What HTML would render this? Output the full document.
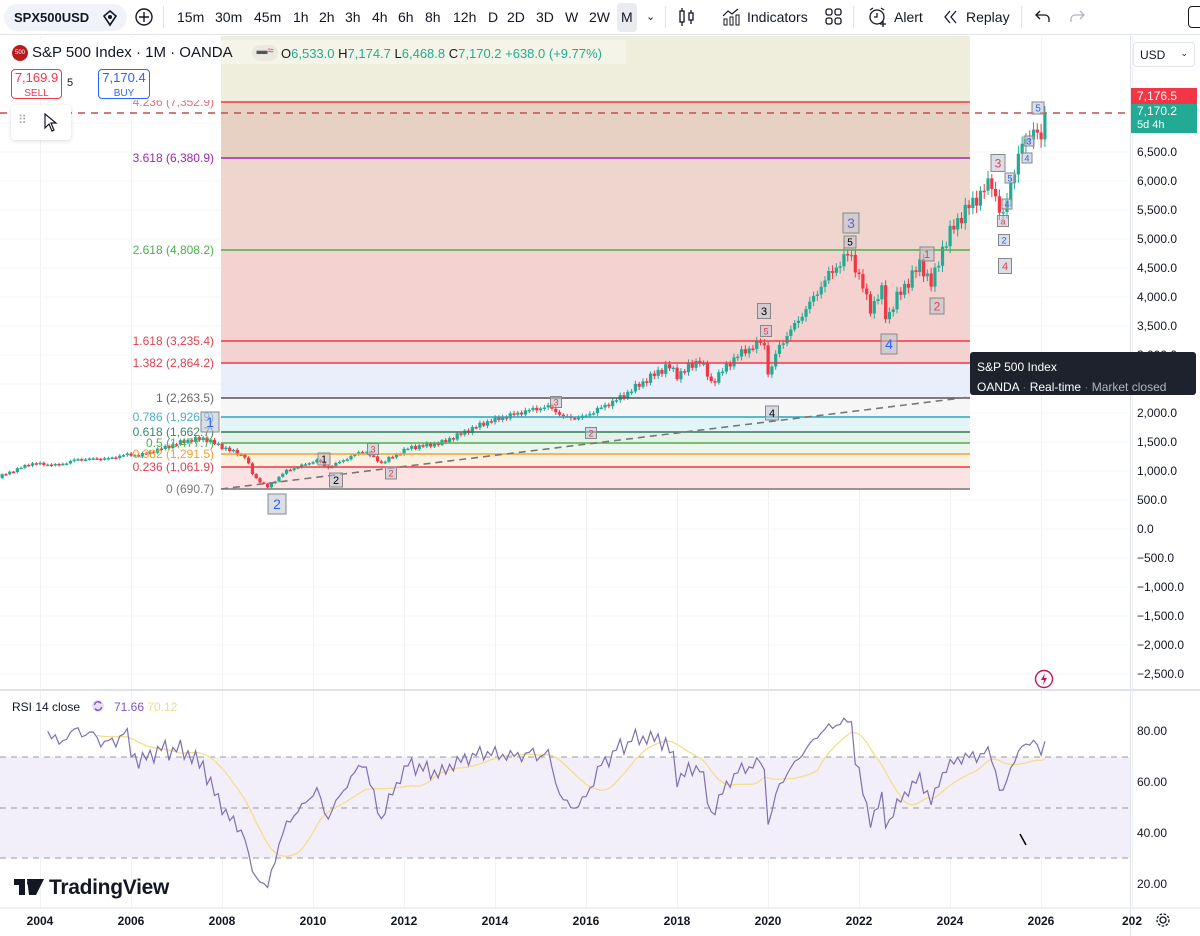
<!DOCTYPE html>
<html><head><meta charset="utf-8"><style>
*{margin:0;padding:0;box-sizing:border-box}
body{width:1200px;height:936px;overflow:hidden;background:#fff;font-family:"Liberation Sans",Arial,sans-serif;color:#131722;position:relative}
.tb{position:absolute;left:0;top:0;width:1200px;height:35px;border-bottom:1px solid #e0e3eb;background:#fff;font-size:14px}
.tb span{position:absolute;top:9px}
.sym{position:absolute;left:4px;top:4px;width:123px;height:27px;background:#f0f3fa;border-radius:14px;font-weight:bold;font-size:13px;padding:6px 0 0 10px}
.ab{position:absolute;font-size:12px}
</style></head><body>
<div class="tb">
<div class="sym">SPX500USD</div>
<svg style="position:absolute;left:101px;top:9px" width="18" height="18" viewBox="0 0 18 18"><path d="M9 2 L15 7 L9 16 L3 7Z" fill="none" stroke="#131722" stroke-width="1.6"/><circle cx="9" cy="8" r="2" fill="#131722"/></svg>
<svg style="position:absolute;left:134px;top:7px" width="20" height="20"><circle cx="10" cy="10" r="8" fill="none" stroke="#131722" stroke-width="1.4"/><path d="M10 5v10M5 10h10" stroke="#131722" stroke-width="1.4"/></svg>
<div style="position:absolute;left:163px;top:6px;width:1px;height:22px;background:#e0e3eb"></div>
<span style="left:177px">15m</span><span style="left:215px">30m</span><span style="left:254px">45m</span><span style="left:293px">1h</span><span style="left:319px">2h</span><span style="left:345px">3h</span><span style="left:372px">4h</span><span style="left:398px">6h</span><span style="left:425px">8h</span><span style="left:453px">12h</span><span style="left:488px">D</span><span style="left:507px">2D</span><span style="left:536px">3D</span><span style="left:565px">W</span><span style="left:589px">2W</span>
<div style="position:absolute;left:617px;top:3px;width:20px;height:29px;background:#e9ebef;border-radius:4px"></div><span style="left:621px">M</span>
<span style="left:646px;font-size:11px;top:10px">⌄</span>
<div style="position:absolute;left:665px;top:6px;width:1px;height:22px;background:#e0e3eb"></div>
<svg style="position:absolute;left:678px;top:7px" width="18" height="20"><rect x="2" y="4" width="4" height="11" fill="none" stroke="#131722" stroke-width="1.3"/><path d="M4 1v3M4 15v4M13 3v3M13 13v4" stroke="#131722" stroke-width="1.3"/><rect x="11" y="6" width="4" height="7" fill="none" stroke="#131722" stroke-width="1.3"/></svg>
<svg style="position:absolute;left:722px;top:8px" width="20" height="18"><path d="M1 8 L6 3 L10 6 L16 1" fill="none" stroke="#131722" stroke-width="1.2"/><rect x="2" y="11" width="3" height="6" fill="none" stroke="#131722"/><rect x="8" y="9" width="3" height="8" fill="none" stroke="#131722"/><rect x="14" y="7" width="3" height="10" fill="none" stroke="#131722"/></svg>
<span style="left:747px">Indicators</span>
<svg style="position:absolute;left:825px;top:8px" width="18" height="18"><rect x="1" y="1" width="6" height="6" rx="2" fill="none" stroke="#131722" stroke-width="1.3"/><rect x="10" y="1" width="6" height="6" rx="2" fill="none" stroke="#131722" stroke-width="1.3"/><rect x="1" y="10" width="6" height="6" rx="2" fill="none" stroke="#131722" stroke-width="1.3"/><rect x="10" y="10" width="6" height="6" rx="2" fill="none" stroke="#131722" stroke-width="1.3"/></svg>
<div style="position:absolute;left:853px;top:6px;width:1px;height:22px;background:#e0e3eb"></div>
<svg style="position:absolute;left:867px;top:6px" width="22" height="22"><circle cx="10" cy="11" r="7" fill="none" stroke="#131722" stroke-width="1.3"/><path d="M10 7v4h-3M3 4l3-2M17 4l-3-2M16 15v6M13 18h6" stroke="#131722" stroke-width="1.3" fill="none"/></svg>
<span style="left:894px">Alert</span>
<svg style="position:absolute;left:943px;top:10px" width="16" height="14"><path d="M7 1 L2 7 L7 13 M13 1 L8 7 L13 13" fill="none" stroke="#131722" stroke-width="1.3"/></svg><span style="left:966px">Replay</span>
<div style="position:absolute;left:1021px;top:6px;width:1px;height:22px;background:#e0e3eb"></div>
<svg style="position:absolute;left:1035px;top:9px" width="16" height="14"><path d="M5 2 L1 6 L5 10 M1 6 H10 a4 4 0 0 1 4 4 V13" fill="none" stroke="#131722" stroke-width="1.3"/></svg>
<svg style="position:absolute;left:1069px;top:9px" width="16" height="14"><path d="M11 2 L15 6 L11 10 M15 6 H6 a4 4 0 0 0 -4 4 V13" fill="none" stroke="#b2b5be" stroke-width="1.3"/></svg>
<div style="position:absolute;left:1188px;top:6px;width:20px;height:22px;border:1.5px solid #131722;border-radius:4px"></div>
</div>

<svg id="ch" style="position:absolute;left:0;top:36px" width="1200" height="900" viewBox="0 36 1200 900">
<g id="bg"></g><g id="cd"></g><g id="ov"></g>
</svg>

<div style="position:absolute;left:0;top:38px;width:221px;height:62px;background:#fff"></div>
<div style="position:absolute;left:221px;top:40px;width:405px;height:24px;background:rgba(255,255,255,.35)"></div>
<div style="position:absolute;left:12px;top:45px;width:16px;height:16px;border-radius:50%;background:#b71c1c;color:#fff;font-size:6px;text-align:center;line-height:16px">500</div>
<div class="ab" style="left:32px;top:44px;font-size:15px">S&amp;P 500 Index · 1M · OANDA</div>
<div style="position:absolute;left:252px;top:45px;width:26px;height:16px;background:#e9e9e0;border-radius:8px;font-size:11px;text-align:center;color:#e53935"><b style="color:#555">▬</b>≈</div>
<div class="ab" style="left:281px;top:46px;font-size:13px;color:#22ab94">
<span style="color:#131722">O</span>6,533.0 <span style="color:#131722">H</span>7,174.7 <span style="color:#131722">L</span>6,468.8 <span style="color:#131722">C</span>7,170.2 +638.0 (+9.77%)</div>
<div style="position:absolute;left:11px;top:69px;width:51px;height:30px;border:1px solid #f23645;border-radius:4px;background:#fff;text-align:center;color:#f23645;font-size:13px;line-height:14px;padding-top:1px">7,169.9<br><span style="font-size:10px">SELL</span></div>
<div class="ab" style="left:67px;top:77px;font-size:11px">5</div>
<div style="position:absolute;left:98px;top:69px;width:52px;height:30px;border:1px solid #2962ff;border-radius:4px;background:#fff;text-align:center;color:#2962ff;font-size:13px;line-height:14px;padding-top:1px">7,170.4<br><span style="font-size:10px">BUY</span></div>
<div style="position:absolute;left:11px;top:105px;width:60px;height:35px;background:#fff;border-radius:4px;box-shadow:0 1px 4px rgba(0,0,0,.15)"></div>
<div class="ab" style="left:18px;top:113px;color:#aaa;font-size:12px">⠿</div>
<svg style="position:absolute;left:43px;top:113px" width="16" height="20"><path d="M2 1 L2 15 L6 11 L9 18 L11 17 L8 10 L13 10Z" fill="#fff" stroke="#131722" stroke-width="1.2"/></svg>

<div style="position:absolute;left:1133px;top:42px;width:62px;height:25px;border:1px solid #e0e3eb;border-radius:4px;font-size:12px;padding:5px 0 0 6px">USD <span style="float:right;margin-right:6px;font-size:9px">⌄</span></div>
<div style="position:absolute;left:1131px;top:88px;width:66px;height:16px;background:#f23645;color:#fff;font-size:12px;padding:1px 0 0 6px">7,176.5</div>
<div style="position:absolute;left:1131px;top:104px;width:66px;height:29px;background:#22ab94;color:#fff;font-size:12px;padding:1px 0 0 6px;line-height:13px">7,170.2<br><span style="font-size:11px">5d 4h</span></div>

<div style="position:absolute;left:970px;top:352px;width:226px;height:43px;background:#1e222d;border-radius:3px;color:#fff;font-size:12px;padding:5px 0 0 7px;line-height:20px">S&amp;P 500 Index<br>OANDA <span style="color:#787b86">·</span> Real-time <span style="color:#787b86">·</span> <span style="color:#b2b5be">Market closed</span></div>

<svg style="position:absolute;left:1034px;top:669px" width="20" height="20"><circle cx="10" cy="10" r="8.5" fill="none" stroke="#c2185b" stroke-width="1.4"/><path d="M11 4 L7 11 L10 11 L9 16 L13 9 L10 9Z" fill="#c2185b"/></svg>

<div class="ab" style="left:12px;top:700px;font-size:12px">RSI 14 close</div>
<svg style="position:absolute;left:91px;top:699px" width="14" height="14"><circle cx="7" cy="7" r="6" fill="#e8e0f8"/><path d="M3.5 6a3.5 3.5 0 0 1 6.5-1.5M10.5 8a3.5 3.5 0 0 1-6.5 1.5" stroke="#7e57c2" stroke-width="1.4" fill="none"/></svg>
<div class="ab" style="left:114px;top:700px;font-size:12px;color:#7e57c2">71.66 <span style="color:#e8e08a">70.12</span></div>
<svg style="position:absolute;left:14px;top:879px" width="30" height="16"><path d="M0 0 H11 V16 H5 V6 H0Z M13 0 h17 L22 16 h-7 z" fill="#131722"/><circle cx="16" cy="4" r="3" fill="#131722"/></svg>
<div class="ab" style="left:49px;top:876px;font-size:21px;font-weight:bold;letter-spacing:-0.3px">TradingView</div>
<svg style="position:absolute;left:1155px;top:912px" width="16" height="16"><circle cx="8" cy="8" r="3" fill="none" stroke="#131722" stroke-width="1.3"/><circle cx="8" cy="8" r="6" fill="none" stroke="#131722" stroke-width="1.3" stroke-dasharray="2.5 1.6"/></svg>

<script>
var NS="http://www.w3.org/2000/svg";
function el(p,t,a){var e=document.createElementNS(NS,t);for(var k in a)e.setAttribute(k,a[k]);p.appendChild(e);return e;}
function X(t){return 40+(t-2004)*45.5;}
function Y(p){return 529-p*0.058;}
var bg=document.getElementById("bg"),cd=document.getElementById("cd"),ov=document.getElementById("ov");
for(var y=2004;y<=2028;y+=2){el(bg,"line",{x1:X(y)+0.5,x2:X(y)+0.5,y1:36,y2:908,stroke:"#f0f1f4"});}
for(var p=-2500;p<=7000;p+=500){var yy=Y(p);el(bg,"line",{x1:0,x2:1130,y1:yy,y2:yy,stroke:"#f6f7f9"});}
el(bg,"rect",{x:221,y:36,width:749,height:66,fill:"#efeedd"});
var zones=[[102,158,"#e6d1c2"],[158,250,"#eed5cd"],[250,341,"#f4d2d0"],[341,363,"#f2d3d2"],[363,398,"#e8effa"],[398,417,"#f6f6f6"],[417,432,"#e3f5f8"],[432,443,"#e4f2ea"],[443,454,"#ecf6ec"],[454,467,"#fcf0e1"],[467,489,"#fbe3e3"]];
zones.forEach(function(z){el(bg,"rect",{x:221,y:z[0],width:749,height:z[1]-z[0],fill:z[2]});});
var fib=[["4.236 (7,352.9)",102,"#f23645","#e07080"],["3.618 (6,380.9)",158,"#9c27b0","#9c27b0"],["2.618 (4,808.2)",250,"#4caf50","#4caf50"],["1.618 (3,235.4)",341,"#f23645","#e04050"],["1.382 (2,864.2)",363,"#f23645","#e04050"],["1 (2,263.5)",398,"#555","#666"],["0.786 (1,926.9)",417,"#26a6c0","#4ab0c8"],["0.618 (1,662.7)",432,"#2e7d5b","#3a8a68"],["0.5 (1,477.7)",443,"#4caf50","#4caf50"],["0.382 (1,291.5)",454,"#f5a030","#f0a030"],["0.236 (1,061.9)",467,"#f23645","#e04050"],["0 (690.7)",489,"#777","#777"]];
fib.forEach(function(f){el(ov,"line",{x1:221,x2:970,y1:f[1],y2:f[1],stroke:f[2],"stroke-width":1.6});var t=el(ov,"text",{x:214,y:f[1]+4,"text-anchor":"end","font-size":12,fill:f[3],"font-family":"Liberation Sans"});t.textContent=f[0];});
el(ov,"line",{x1:221,x2:970,y1:489,y2:397,stroke:"#777","stroke-width":1.6,"stroke-dasharray":"7 5"});
el(ov,"line",{x1:0,x2:1130,y1:113,y2:113,stroke:"#c0504d","stroke-width":1.4,"stroke-dasharray":"7 6"});
var K=[[2003.0,860],[2003.2,870],[2004,1130],[2004.6,1100],[2005,1200],[2005.8,1220],[2006,1280],[2006.4,1270],[2007,1420],[2007.4,1520],[2007.8,1560],[2008.3,1380],[2008.7,1250],[2008.9,900],[2009.2,720],[2009.6,1000],[2010.3,1190],[2010.5,1050],[2011.3,1350],[2011.7,1140],[2012.3,1400],[2013,1480],[2014,1840],[2015,2060],[2015.4,2110],[2015.7,1930],[2016.1,1920],[2016.9,2240],[2018,2820],[2018.2,2650],[2018.7,2920],[2018.95,2520],[2019.5,2980],[2020.1,3250],[2020.22,2600],[2020.4,3100],[2021,3750],[2021.5,4350],[2022,4770],[2022.45,3800],[2022.7,4100],[2022.8,3600],[2023,3950],[2023.55,4580],[2023.8,4200],[2024,4780],[2024.3,5250],[2024.55,5500],[2025,5900],[2025.1,6000],[2025.25,5600],[2025.35,5300],[2025.5,5900],[2025.8,6650],[2026,6850],[2026.08,6950],[2026.17,6530],[2026.3,7170]];
function interp(t){if(t<=K[0][0])return K[0][1];for(var i=0;i<K.length-1;i++){if(t>=K[i][0]&&t<=K[i+1][0]){var f=(t-K[i][0])/(K[i+1][0]-K[i][0]);return K[i][1]+(K[i+1][1]-K[i][1])*f;}}return K[K.length-1][1];}
var closes=[],prev=860;
for(var i=0;i<=277;i++){var t=2003.2+i/12;
 var c=interp(t)*(1+0.018*Math.sin(t*37.1)+0.01*Math.sin(t*91.7));
 if(i==277)c=7170;
 var o=prev,hi=Math.max(o,c)*(1+0.012+0.01*Math.abs(Math.sin(t*13))),lo=Math.min(o,c)*(1-0.012-0.012*Math.abs(Math.sin(t*17)));
 var x=X(t)-9,col=c>=o?"#22ab94":"#f23645";
 el(cd,"line",{x1:x,x2:x,y1:Y(hi),y2:Y(lo),stroke:col,"stroke-width":1});
 var y1=Y(Math.max(o,c)),h=Math.max(1.5,Math.abs(Y(o)-Y(c)));
 el(cd,"rect",{x:x-1.6,y:y1,width:3.2,height:h,fill:col});
 closes.push([x,c]);prev=c;
}
var W=[[210,422,"1","#2962ff",14,18,20],[277,504,"2","#2962ff",14,18,20],[324,459,"1","#000",10,12,12],[336,480,"2","#000",11,13,14],[373,449,"3","#e04050",9,11,11],[391,473,"2","#e04050",9,11,12],[556,402,"3","#e04050",9,11,11],[591,433,"2","#e04050",9,11,11],[764,311,"3","#000",11,13,15],[766,331,"5","#e04050",9,11,11],[772,413,"4","#000",11,13,14],[851,223,"3","#5c6bc0",14,16,20],[850,242,"5","#000",10,12,12],[889,344,"4","#2962ff",14,16,20],[927,254,"1","#e04050",11,14,14],[937,306,"2","#e04050",12,14,16],[998,163,"3","#e04050",12,14,17],[1003,221,"a","#e04050",9,11,11],[1004,240,"2","#2962ff",9,11,11],[1005,266,"4","#e04050",11,13,15],[1038,108,"5","#2962ff",10,12,12],[1029,141,"3","#2962ff",9,10,10],[1027,158,"4","#2962ff",9,10,10],[1010,178,"5","#2962ff",9,10,10],[1007,204,"4","#2962ff",9,10,10]];
W.forEach(function(w){el(ov,"rect",{x:w[0]-w[5]/2,y:w[1]-w[6]/2,width:w[5],height:w[6],fill:"rgba(190,195,210,.55)",stroke:"#888","stroke-width":1});var t=el(ov,"text",{x:w[0],y:w[1]+w[4]*0.37,"text-anchor":"middle","font-size":w[4],fill:w[3],"font-family":"Liberation Sans"});t.textContent=w[2];});
el(ov,"line",{x1:1130.5,x2:1130.5,y1:36,y2:936,stroke:"#e0e3eb"});
el(ov,"line",{x1:0,x2:1200,y1:690,y2:690,stroke:"#e0e3eb","stroke-width":2});
el(ov,"line",{x1:0,x2:1200,y1:908,y2:908,stroke:"#e0e3eb"});
el(ov,"rect",{x:0,y:757,width:1130,height:101,fill:"#f3effa"});
[757,808,858].forEach(function(y){el(ov,"line",{x1:0,x2:1130,y1:y,y2:y,stroke:"#999","stroke-width":1,"stroke-dasharray":"6 5"});});
function RY(r){return 935-r*2.55;}
var rsi=[],ag=0,al=0;
for(var i=1;i<closes.length;i++){var d=closes[i][1]-closes[i-1][1],g=Math.max(d,0),l=Math.max(-d,0);
 if(i<=14){ag+=g/14;al+=l/14;if(i<14)continue;}else{ag=(ag*13+g)/14;al=(al*13+l)/14;}
 rsi.push([closes[i][0],100-100/(1+ag/(al||1e-9))]);}
var pts=rsi.map(function(r){return r[0].toFixed(1)+","+RY(r[1]).toFixed(1);}).join(" ");
var ma=[];for(var i=13;i<rsi.length;i++){var s=0;for(var j=i-13;j<=i;j++)s+=rsi[j][1];ma.push(rsi[i][0].toFixed(1)+","+RY(s/14).toFixed(1));}
el(ov,"polyline",{points:ma.join(" "),fill:"none",stroke:"#f0e08a","stroke-width":1.3});
el(ov,"polyline",{points:pts,fill:"none",stroke:"#7e6fb0","stroke-width":1.2});
el(ov,"line",{x1:1020,x2:1026,y1:834,y2:845,stroke:"#000","stroke-width":1.5});
for(var p=-2500;p<=6500;p+=500){var s=(p<0?"−":"")+Math.abs(p).toLocaleString("en-US")+".0";var t=el(ov,"text",{x:1137,y:Y(p)+4,"font-size":12,fill:"#131722","font-family":"Liberation Sans"});t.textContent=s;}
[[80,"80.00"],[60,"60.00"],[40,"40.00"],[20,"20.00"]].forEach(function(r){var t=el(ov,"text",{x:1137,y:RY(r[0])+4,"font-size":12,fill:"#131722","font-family":"Liberation Sans"});t.textContent=r[1];});
for(var y=2004;y<=2028;y+=2){var t=el(ov,"text",{x:X(y),y:925,"text-anchor":"middle","font-size":12,"font-weight":"bold",fill:"#131722","font-family":"Liberation Sans"});t.textContent=y==2028?"202":y;}
</script>
</body></html>
